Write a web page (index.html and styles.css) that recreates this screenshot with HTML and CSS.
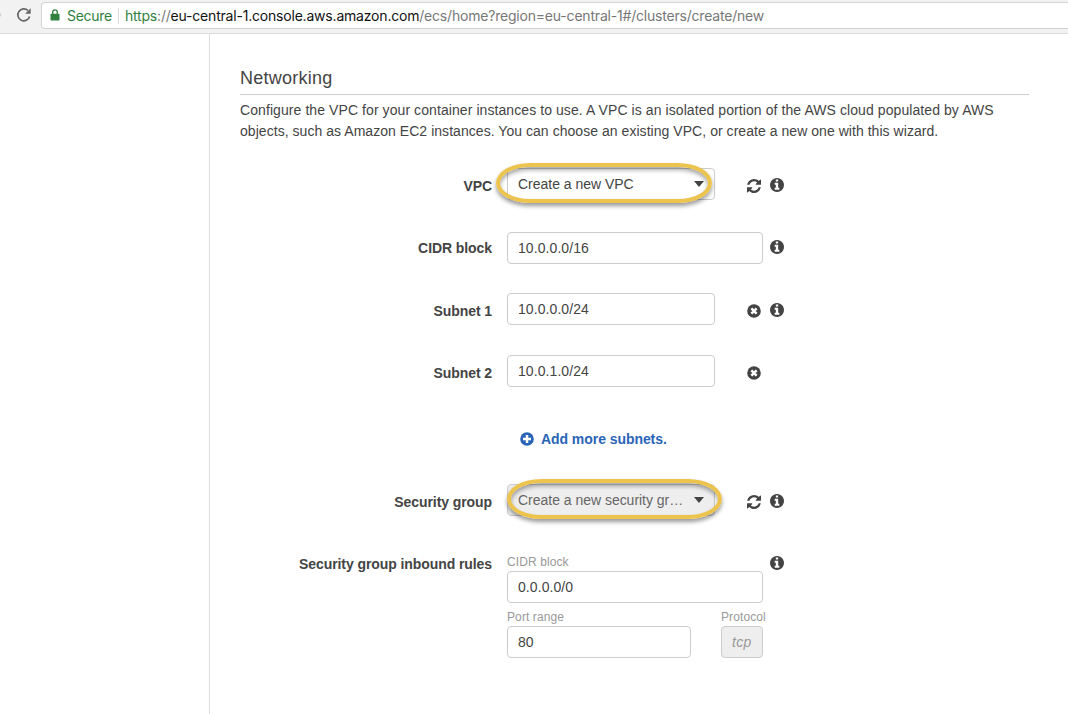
FILE: index.html
```html
<!DOCTYPE html>
<html lang="en">
<head>
<meta charset="utf-8">
<title>Create cluster</title>
<link rel="stylesheet" href="styles.css">
</head>
<body>
<svg class="sprite" aria-hidden="true">
  <symbol id="refresh" viewBox="0 0 1536 1536"><path d="M1511 928q0 5-1 7-64 268-268 434.500t-478 166.500q-146 0-282.500-55t-243.500-157l-129 129q-19 19-45 19t-45-19-19-45v-448q0-26 19-45t45-19h448q26 0 45 19t19 45-19 45l-137 137q71 66 161 102t187 36q134 0 250-65t186-179q11-17 53-117 8-23 30-23h192q13 0 22.500 9.500t9.500 22.500zm25-800v448q0 26-19 45t-45 19h-448q-26 0-45-19t-19-45 19-45l138-138q-148-137-349-137-134 0-250 65t-186 179q-11 17-53 117-8 23-30 23h-199q-13 0-22.500-9.500t-9.500-22.500v-7q65-268 270-434.500t480-166.500q146 0 284 55.500t245 156.500l130-129q19-19 45-19t45 19 19 45z"/></symbol>
  <symbol id="info" viewBox="0 0 1536 1536"><path d="M1024 1248v-160q0-14-9-23t-23-9h-96v-512q0-14-9-23t-23-9h-320q-14 0-23 9t-9 23v160q0 14 9 23t23 9h96v320h-96q-14 0-23 9t-9 23v160q0 14 9 23t23 9h448q14 0 23-9t9-23zm-128-896v-160q0-14-9-23t-23-9h-192q-14 0-23 9t-9 23v160q0 14 9 23t23 9h192q14 0 23-9t9-23zm640 416q0 209-103 385.500t-279.500 279.500-385.500 103-385.500-103-279.500-279.500-103-385.500 103-385.500 279.500-279.500 385.500-103 385.500 103 279.500 279.500 103 385.500z"/></symbol>
  <symbol id="remove" viewBox="0 0 14 14"><circle cx="7" cy="7" r="6.800"/><path class="cut" d="M4.400 4.400l5.200 5.200M9.600 4.400l-5.200 5.200"/></symbol>
  <symbol id="add" viewBox="0 0 14 14"><circle cx="7" cy="7" r="6.800"/><path class="cut" d="M7 3v8M3 7h8"/></symbol>
</svg>

<header class="toolbar">
  <svg class="forward" viewBox="0 0 3 8"><path d="M0 1l2 3-2 3z"/></svg>
  <svg class="reload" viewBox="0 0 16 16"><path class="arc" d="M13.600 9.400A6 6 0 1 1 12 3.500"/><path d="M14.700 1.200v5.600H9.100z"/></svg>
  <div class="address">
    <svg class="lock" viewBox="0 0 10 12"><path class="shackle" d="M2.700 6V3.200a2.200 2.200 0 0 1 4.600 0V6"/><rect x="0.500" y="4.800" width="9" height="6.700" rx="0.800"/></svg>
    <span class="secure">Secure</span>
    <span class="url"><span class="scheme">https</span>://<span class="host">eu-central-1.console.aws.amazon.com</span>/ecs/home?region=eu-central-1#/clusters/create/new</span>
  </div>
</header>

<div class="page">
  <aside class="sidebar"></aside>
  <main class="content">
    <h2 class="title">Networking</h2>
    <p class="intro"><span class="line1">Configure the VPC for your container instances to use. A VPC is an isolated portion of the AWS cloud populated by AWS</span><br><span class="line2">objects, such as Amazon EC2 instances. You can choose an existing VPC, or create a new one with this wizard.</span></p>

    <div class="row">
      <label class="label">VPC</label>
      <div class="field medium raised select">Create a new VPC<span class="caret"></span><span class="highlight ring-vpc"></span></div>
      <div class="icons"><svg class="icon"><use href="#refresh"/></svg><svg class="icon info"><use href="#info"/></svg></div>
    </div>
    <div class="row cidr">
      <label class="label">CIDR block</label>
      <div class="field wide">10.0.0.0/16</div>
      <div class="icons"><svg class="icon info"><use href="#info"/></svg></div>
    </div>
    <div class="row">
      <label class="label">Subnet 1</label>
      <div class="field medium raised">10.0.0.0/24</div>
      <div class="icons"><svg class="icon"><use href="#remove"/></svg><svg class="icon info"><use href="#info"/></svg></div>
    </div>
    <div class="row subnet-last">
      <label class="label">Subnet 2</label>
      <div class="field medium raised">10.0.1.0/24</div>
      <div class="icons start"><svg class="icon"><use href="#remove"/></svg></div>
    </div>
    <div class="row">
      <span></span>
      <a class="add"><svg class="icon"><use href="#add"/></svg><span>Add more subnets.</span></a>
    </div>
    <div class="row">
      <label class="label">Security group</label>
      <div class="field medium raised select disabled">Create a new security gr…<span class="caret"></span><span class="highlight ring-group"></span></div>
      <div class="icons"><svg class="icon"><use href="#refresh"/></svg><svg class="icon info"><use href="#info"/></svg></div>
    </div>
    <div class="row">
      <label class="label">Security group inbound rules</label>
      <div class="rule">
        <div class="caption">CIDR block</div>
        <div class="field wide">0.0.0.0/0</div>
        <div class="rule-line">
          <div><div class="caption">Port range</div><div class="field port">80</div></div>
          <div class="protocol"><div class="caption">Protocol</div><div class="field tcp">tcp</div></div>
        </div>
      </div>
      <div class="icons"><svg class="icon info"><use href="#info"/></svg></div>
    </div>
  </main>
</div>
</body>
</html>
```
FILE: styles.css
```css
* { box-sizing: border-box; }
body {
  margin: 0;
  height: 714px;
  overflow: hidden;
  background: #fff;
  color: #444;
  font: 14px/21px "Liberation Sans", Arial, sans-serif;
}
.sprite { display: none; }
.cut { fill: none; stroke: #fff; stroke-width: 2.500; }

.toolbar {
  display: flex;
  height: 34px;
  background: #f2f2f2;
  border-bottom: 1px solid #dcdcdc;
  font: 14px/26px Inter, sans-serif;
}
.forward { width: 2px; height: 8px; margin-top: 11px; fill: #ccc; }
.reload { width: 16px; height: 16px; margin: 7px 9px 0 14px; fill: #666; }
.arc { fill: none; stroke: #666; stroke-width: 1.700; }
.address {
  display: flex;
  flex: 1;
  height: 27px;
  margin-top: 2px;
  border: 1px solid #d4d4d4;
  border-right: 0;
  border-radius: 4px 0 0 4px;
  background: #fff;
  color: #777;
  white-space: nowrap;
}
.lock { width: 10px; height: 12px; margin: 6px 7px 0 8px; fill: #31813e; }
.shackle { fill: none; stroke: #31813e; stroke-width: 1.300; }
.secure { width: 52px; height: 16px; margin: 5px 6px 0 0; line-height: 16px; color: #31813e; border-right: 1px solid #d8d8d8; letter-spacing: -0.3px; }
.url { letter-spacing: -0.2px; }
.scheme { color: #31813e; }
.host { color: #111; }

.page { display: flex; height: 680px; }
.sidebar { width: 210px; border-right: 1px solid #ddd; }
.content { width: 819px; padding: 32px 0 0 30px; }
.title {
  height: 29px;
  margin: 0;
  border-bottom: 1px solid #ccc;
  font-size: 18px;
  font-weight: 400;
  line-height: 24px;
  letter-spacing: 0.25px;
}
.intro { height: 75px; margin: 0; padding-top: 5px; white-space: nowrap; }
.line1 { letter-spacing: 0.079px; }
.line2 { letter-spacing: 0.045px; }

.row { display: grid; grid-template-columns: 252px 255px 37px; height: 62px; }
.row > :nth-child(2) { margin-left: 15px; }
.row.cidr { height: 63px; }
.row.subnet-last { height: 67px; }
.label { line-height: 32px; font-weight: 700; text-align: right; white-space: nowrap; letter-spacing: -0.08px; }
.field {
  height: 32px;
  padding: 0 10px;
  border: 1px solid #ccc;
  border-radius: 4px;
  background: #fff;
  line-height: 30px;
  letter-spacing: 0.08px;
  white-space: nowrap;
}
.raised { margin-top: -2px; }
.medium { width: 208px; }
.wide { width: 256px; }
.select { position: relative; display: flex; justify-content: space-between; align-items: center; letter-spacing: -0.02px; }
.caret { border: 5.500px solid transparent; border-top: 6px solid #444; border-bottom: 0; }
.disabled { background: #eee; color: #666; }
.highlight {
  position: absolute;
  border: 4px solid #ecc44d;
  border-radius: 34px / 20px;
  box-shadow: 0 3px 4px rgba(0, 0, 0, .4), inset 0 3px 4px rgba(0, 0, 0, .35);
}
.ring-vpc { inset: -6px 2px -4px -12px; }
.ring-group { inset: -6px -8px -4px -1px; }

.icons { display: flex; justify-content: flex-end; gap: 9px; padding-top: 9px; }
.icons.start { justify-content: flex-start; }
.icon { width: 14px; height: 14px; fill: #444; }
.icon.info { margin-top: -1px; }
.add { display: flex; align-items: center; gap: 7px; height: 31px; padding-left: 13px; color: #2a64b7; font-weight: 700; letter-spacing: -0.06px; white-space: nowrap; }
.add .icon { margin-top: -1px; fill: #2a64b7; }

.rule { margin-top: 4px; }
.caption { height: 19px; color: #999; font-size: 12px; line-height: 20px; letter-spacing: 0.1px; }
.rule-line { display: flex; gap: 30px; width: 262px; margin-top: 4px; }
.port { width: 184px; }
.tcp { width: 42px; background: #eee; color: #999; font-style: italic; letter-spacing: 0.3px; }
```
